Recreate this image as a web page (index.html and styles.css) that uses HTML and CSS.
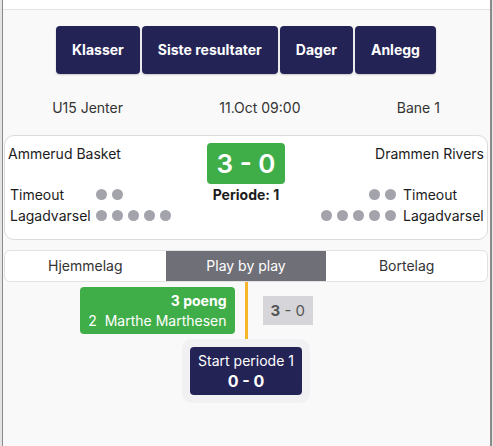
FILE: index.html
```html
<!DOCTYPE html>
<html lang="no">
<head>
    <meta charset="UTF-8">
    <title>Kamp</title>
    <link rel="stylesheet" href="styles.css">
</head>
<body>
    <div class="frame">
        <div class="topbar"></div>
        <div class="content">
            <div class="menu">
                <div class="menubtn">Klasser</div>
                <div class="menubtn">Siste resultater</div>
                <div class="menubtn">Dager</div>
                <div class="menubtn">Anlegg</div>
            </div>

            <div class="info">
                <span>U15 Jenter</span>
                <span>11.Oct 09:00</span>
                <span>Bane 1</span>
            </div>

            <div class="scorecard">
                <div class="team home">Ammerud Basket</div>
                <div class="score">3 - 0</div>
                <div class="team away">Drammen Rivers</div>

                <div class="stat">
                    <span class="label">Timeout</span>
                    <span class="dots"><i></i><i></i></span>
                </div>
                <div class="period">Periode: 1</div>
                <div class="stat right">
                    <span class="dots"><i></i><i></i></span>
                    <span class="label">Timeout</span>
                </div>

                <div class="stat">
                    <span class="label">Lagadvarsel</span>
                    <span class="dots"><i></i><i></i><i></i><i></i><i></i></span>
                </div>
                <div></div>
                <div class="stat right">
                    <span class="dots"><i></i><i></i><i></i><i></i><i></i></span>
                    <span class="label">Lagadvarsel</span>
                </div>
            </div>

            <div class="tabs">
                <div class="tab">Hjemmelag</div>
                <div class="tab active">Play by play</div>
                <div class="tab">Bortelag</div>
            </div>

            <div class="event">
                <div class="side left">
                    <div class="play home">
                        <b>3 poeng</b>
                        <span>2&nbsp;&nbsp;Marthe Marthesen</span>
                    </div>
                </div>
                <div class="line"></div>
                <div class="side rightside">
                    <div class="runscore"><b>3</b> - 0</div>
                </div>
            </div>

            <div class="start">
                <div class="startwrap">
                    <div class="startbox">
                        <span>Start periode 1</span>
                        <b>0 - 0</b>
                    </div>
                </div>
            </div>
        </div>
    </div>
</body>
</html>
```

FILE: styles.css
```css
*{
    margin: 0;
    padding: 0;
    box-sizing: border-box;
}
body{
    background-color: #e4e4e4;
    font-family: Inter, "Noto Sans", sans-serif;
    font-size: 14px;
    color: #1c1c1c;
}
.frame{
    margin-left: 2px;
    width: 490px;
    height: 446px;
    border-left: 1px solid #8a8a8a;
    border-right: 2px solid #8a8a8a;
    background-color: #f9f9f9;
}
.topbar{
    height: 10px;
    background-color: #fff;
    border-bottom: 1px solid #e4e4e4;
}
.content{
    padding: 16px 2px 0 1px;
}
.menu{
    display: flex;
    justify-content: center;
    gap: 2px;
}
.menubtn{
    height: 48px;
    line-height: 48px;
    padding: 0 16px;
    background-color: #242356;
    color: #fff;
    font-weight: 700;
    border-radius: 4px;
    box-shadow: 0 1px 2px rgba(0,0,0,0.2);
}
.info{
    display: flex;
    justify-content: space-around;
    margin-top: 24px;
    line-height: 20px;
    color: #333;
}
.scorecard{
    margin-top: 17px;
    background-color: #fff;
    border: 1px solid #dcdcdc;
    border-radius: 10px;
    padding: 7px 3px 13px 3px;
    display: grid;
    grid-template-columns: 1fr auto 1fr;
    grid-template-rows: 41px 21px 21px;
}
.team{
    line-height: 20px;
    padding-top: 1px;
}
.team.away{
    text-align: right;
}
.score{
    width: 78px;
    height: 41px;
    line-height: 41px;
    text-align: center;
    background-color: #3fae49;
    color: #fff;
    font-size: 26px;
    font-weight: 600;
    border-radius: 4px;
}
.period{
    text-align: center;
    font-weight: 700;
    line-height: 21px;
}
.stat{
    display: flex;
    align-items: center;
    padding-left: 2px;
}
.stat .label{
    width: 86px;
}
.stat.right{
    justify-content: flex-end;
    padding-left: 0;
}
.stat.right .label{
    width: 88px;
    padding-left: 7px;
}
.dots{
    display: flex;
    gap: 5px;
}
.dots i{
    width: 11px;
    height: 11px;
    border-radius: 50%;
    background-color: #a3a3ab;
}
.tabs{
    margin-top: 10px;
    display: grid;
    grid-template-columns: 1fr 1fr 1fr;
    background-color: #fff;
    border: 1px solid #e2e2e2;
    border-radius: 6px;
    overflow: hidden;
}
.tab{
    height: 30px;
    line-height: 30px;
    text-align: center;
    color: #333;
}
.tab.active{
    background-color: #6f6f78;
    color: #fff;
}
.event{
    display: grid;
    grid-template-columns: 1fr 3px 1fr;
}
.line{
    background-color: #f7b52c;
}
.side{
    display: flex;
    align-items: center;
    padding: 5px 0;
}
.side.left{
    justify-content: flex-end;
    padding-right: 10px;
}
.side.rightside{
    padding-left: 15px;
}
.play{
    display: flex;
    flex-direction: column;
    align-items: flex-end;
    padding: 4px 8px 3px 8px;
    line-height: 20px;
    background-color: #3fae49;
    color: #fff;
    border-radius: 4px;
}
.runscore{
    background-color: #d6d6da;
    color: #555;
    font-size: 15px;
    padding: 0 8px;
    height: 29px;
    line-height: 29px;
}
.start{
    display: flex;
    justify-content: center;
}
.startwrap{
    background-color: #f1f1f3;
    padding: 8px;
    border-radius: 10px;
}
.startbox{
    display: flex;
    flex-direction: column;
    align-items: center;
    padding: 4px 8px;
    line-height: 20px;
    background-color: #242356;
    color: #fff;
    border-radius: 4px;
}
.startbox b{
    font-size: 16px;
}
```
